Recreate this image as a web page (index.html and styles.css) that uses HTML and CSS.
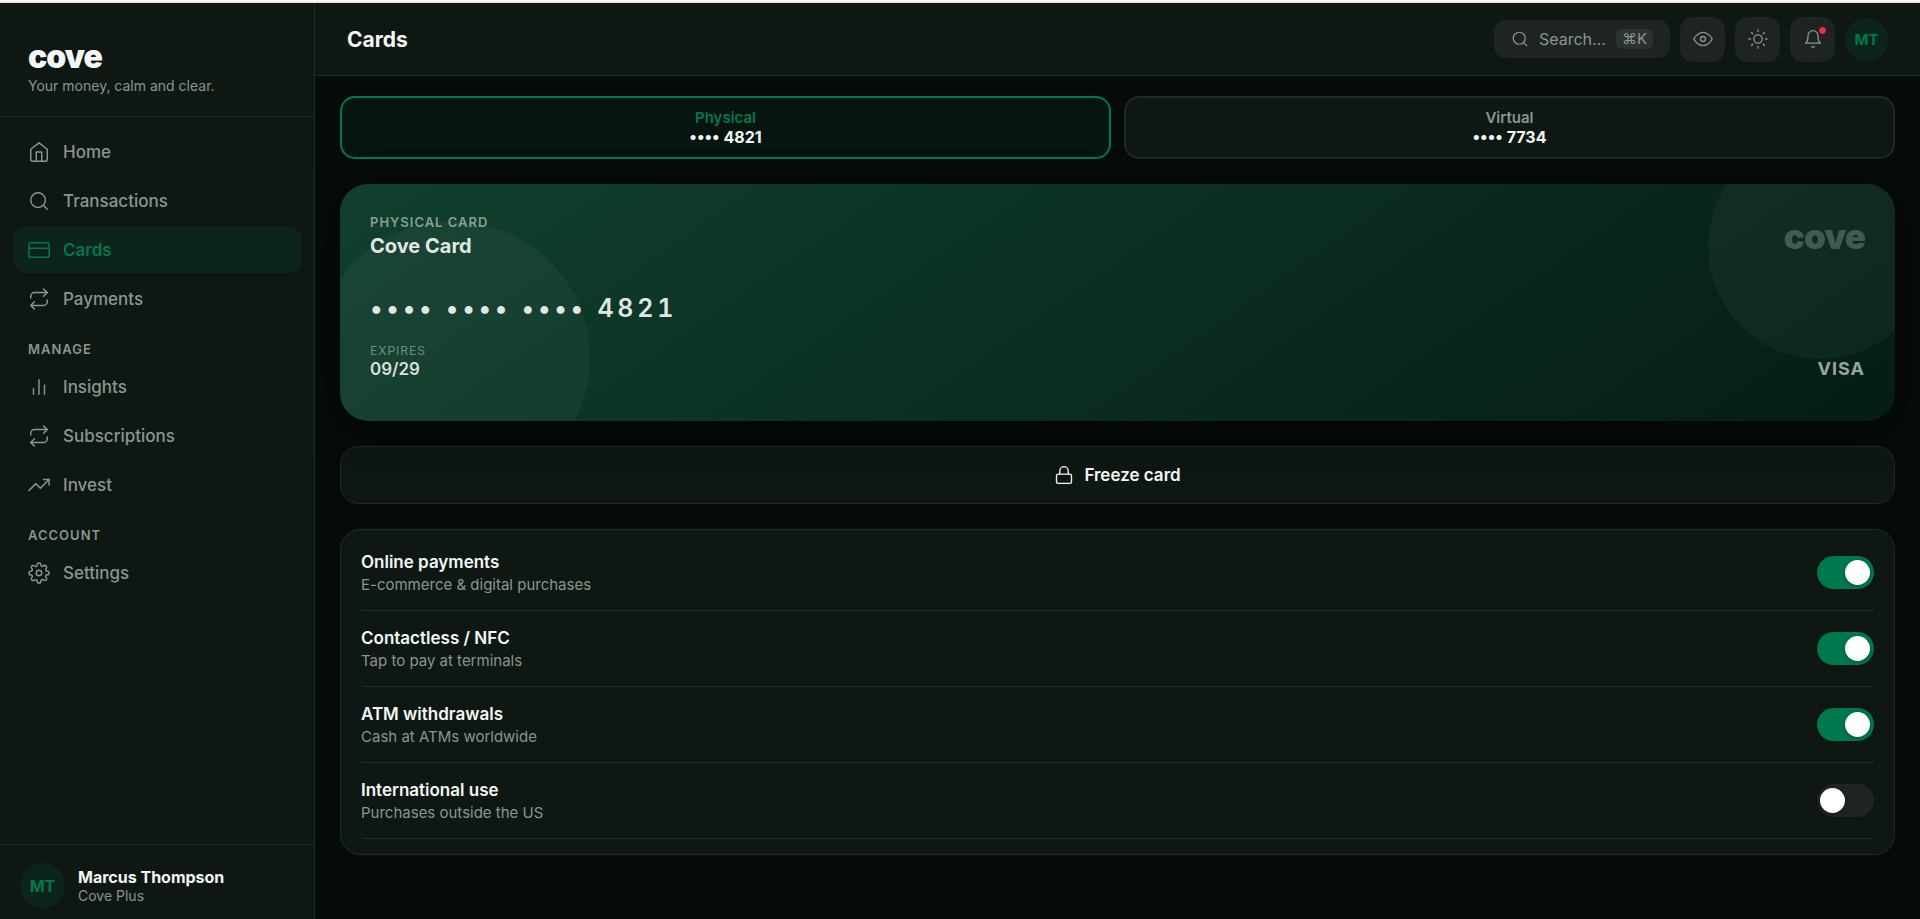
FILE: index.html
```html
<!DOCTYPE html>
<html lang="en">
<head>
    <meta charset="UTF-8">
    <meta name="viewport" content="width=device-width, initial-scale=1.0">
    <title>Cove - Cards</title>
    <link rel="stylesheet" href="styles.css">
</head>
<body>
<div class="strip"></div>
<div class="app">

    <!-- Sidebar -->
    <aside class="sidebar">
        <div class="brand">
            <div class="logo">cove</div>
            <div class="tagline">Your money, calm and clear.</div>
        </div>

        <nav class="nav">
            <a class="nav-item" href="#home">
                <svg class="icon" viewBox="0 0 24 24"><path d="M3 9l9-7 9 7v11a2 2 0 0 1-2 2H5a2 2 0 0 1-2-2z"/><path d="M9 22V12h6v10"/></svg>
                Home
            </a>
            <a class="nav-item" href="#transactions">
                <svg class="icon" viewBox="0 0 24 24"><circle cx="11" cy="11" r="8"/><path d="M21 21l-4.35-4.35"/></svg>
                Transactions
            </a>
            <a class="nav-item active" href="#cards">
                <svg class="icon" viewBox="0 0 24 24"><rect x="1" y="4" width="22" height="16" rx="2"/><path d="M1 10h22"/></svg>
                Cards
            </a>
            <a class="nav-item" href="#payments">
                <svg class="icon" viewBox="0 0 24 24"><path d="M17 1l4 4-4 4"/><path d="M3 11V9a4 4 0 0 1 4-4h14"/><path d="M7 23l-4-4 4-4"/><path d="M21 13v2a4 4 0 0 1-4 4H3"/></svg>
                Payments
            </a>

            <div class="nav-label">Manage</div>
            <a class="nav-item" href="#insights">
                <svg class="icon" viewBox="0 0 24 24"><path d="M18 20V10"/><path d="M12 20V4"/><path d="M6 20v-6"/></svg>
                Insights
            </a>
            <a class="nav-item" href="#subscriptions">
                <svg class="icon" viewBox="0 0 24 24"><path d="M17 1l4 4-4 4"/><path d="M3 11V9a4 4 0 0 1 4-4h14"/><path d="M7 23l-4-4 4-4"/><path d="M21 13v2a4 4 0 0 1-4 4H3"/></svg>
                Subscriptions
            </a>
            <a class="nav-item" href="#invest">
                <svg class="icon" viewBox="0 0 24 24"><path d="M23 6l-9.5 9.5-5-5L1 18"/><path d="M17 6h6v6"/></svg>
                Invest
            </a>

            <div class="nav-label">Account</div>
            <a class="nav-item" href="#settings">
                <svg class="icon" viewBox="0 0 24 24"><circle cx="12" cy="12" r="3"/><path d="M19.4 15a1.65 1.65 0 0 0 .33 1.82l.06.06a2 2 0 0 1 0 2.83 2 2 0 0 1-2.83 0l-.06-.06a1.65 1.65 0 0 0-1.82-.33 1.65 1.65 0 0 0-1 1.51V21a2 2 0 0 1-2 2 2 2 0 0 1-2-2v-.09A1.65 1.65 0 0 0 9 19.4a1.65 1.65 0 0 0-1.82.33l-.06.06a2 2 0 0 1-2.83 0 2 2 0 0 1 0-2.83l.06-.06a1.65 1.65 0 0 0 .33-1.82 1.65 1.65 0 0 0-1.51-1H3a2 2 0 0 1-2-2 2 2 0 0 1 2-2h.09A1.65 1.65 0 0 0 4.6 9a1.65 1.65 0 0 0-.33-1.82l-.06-.06a2 2 0 0 1 0-2.83 2 2 0 0 1 2.83 0l.06.06a1.65 1.65 0 0 0 1.82.33H9a1.65 1.65 0 0 0 1-1.51V3a2 2 0 0 1 2-2 2 2 0 0 1 2 2v.09a1.65 1.65 0 0 0 1 1.51 1.65 1.65 0 0 0 1.82-.33l.06-.06a2 2 0 0 1 2.83 0 2 2 0 0 1 0 2.83l-.06.06a1.65 1.65 0 0 0-.33 1.82V9a1.65 1.65 0 0 0 1.51 1H21a2 2 0 0 1 2 2 2 2 0 0 1-2 2h-.09a1.65 1.65 0 0 0-1.51 1z"/></svg>
                Settings
            </a>
        </nav>

        <div class="profile">
            <div class="avatar">MT</div>
            <div>
                <div class="profile-name">Marcus Thompson</div>
                <div class="profile-plan">Cove Plus</div>
            </div>
        </div>
    </aside>

    <div class="main">
        <!-- Top bar -->
        <header class="topbar">
            <h1>Cards</h1>
            <div class="actions">
                <button class="search" type="button">
                    <svg class="icon icon-xs" viewBox="0 0 24 24"><circle cx="11" cy="11" r="8"/><path d="M21 21l-4.35-4.35"/></svg>
                    <span>Search…</span>
                    <kbd>⌘K</kbd>
                </button>
                <button class="icon-btn" type="button" aria-label="Hide balances">
                    <svg class="icon icon-sm" viewBox="0 0 24 24"><path d="M1 12s4-8 11-8 11 8 11 8-4 8-11 8-11-8-11-8z"/><circle cx="12" cy="12" r="3"/></svg>
                </button>
                <button class="icon-btn" type="button" aria-label="Theme">
                    <svg class="icon icon-sm" viewBox="0 0 24 24"><circle cx="12" cy="12" r="5"/><path d="M12 1v2M12 21v2M4.22 4.22l1.42 1.42M18.36 18.36l1.42 1.42M1 12h2M21 12h2M4.22 19.78l1.42-1.42M18.36 5.64l1.42-1.42"/></svg>
                </button>
                <button class="icon-btn" type="button" aria-label="Notifications">
                    <svg class="icon icon-sm" viewBox="0 0 24 24"><path d="M18 8A6 6 0 0 0 6 8c0 7-3 9-3 9h18s-3-2-3-9"/><path d="M13.73 21a2 2 0 0 1-3.46 0"/></svg>
                    <span class="dot"></span>
                </button>
                <button class="avatar avatar-sm" type="button">MT</button>
            </div>
        </header>

        <main class="content">
            <div class="tabs">
                <button class="tab active" type="button">
                    <span class="tab-name">Physical</span>
                    <span class="tab-number">•••• 4821</span>
                </button>
                <button class="tab" type="button">
                    <span class="tab-name">Virtual</span>
                    <span class="tab-number">•••• 7734</span>
                </button>
            </div>

            <!-- Bank card -->
            <section class="card">
                <div class="card-row">
                    <div>
                        <div class="card-type">Physical card</div>
                        <div class="card-name">Cove Card</div>
                    </div>
                    <div class="card-logo">cove</div>
                </div>
                <div class="card-number">•••• •••• •••• 4821</div>
                <div class="card-row card-bottom">
                    <div>
                        <div class="card-label">Expires</div>
                        <div class="card-date">09/29</div>
                    </div>
                    <div class="card-network">VISA</div>
                </div>
            </section>

            <button class="freeze" type="button">
                <svg class="icon icon-sm" viewBox="0 0 24 24"><rect x="3" y="11" width="18" height="11" rx="2"/><path d="M7 11V7a5 5 0 0 1 10 0v4"/></svg>
                Freeze card
            </button>

            <!-- Card controls -->
            <section class="controls">
                <label class="control">
                    <span>
                        <span class="control-name">Online payments</span>
                        <span class="control-text">E-commerce &amp; digital purchases</span>
                    </span>
                    <input class="toggle" type="checkbox" checked>
                </label>
                <label class="control">
                    <span>
                        <span class="control-name">Contactless / NFC</span>
                        <span class="control-text">Tap to pay at terminals</span>
                    </span>
                    <input class="toggle" type="checkbox" checked>
                </label>
                <label class="control">
                    <span>
                        <span class="control-name">ATM withdrawals</span>
                        <span class="control-text">Cash at ATMs worldwide</span>
                    </span>
                    <input class="toggle" type="checkbox" checked>
                </label>
                <label class="control">
                    <span>
                        <span class="control-name">International use</span>
                        <span class="control-text">Purchases outside the US</span>
                    </span>
                    <input class="toggle" type="checkbox">
                </label>
            </section>
        </main>
    </div>
</div>
</body>
</html>
```
FILE: styles.css
```css
:root {
    --bg: #050b09;
    --surface: #0f1713;
    --surface-2: #1e2421;
    --border: #222825;
    --text: #f4f7f5;
    --muted: #8b9590;
    --green: #00784e;
    --green-soft: #0d241c;
}

* {
    box-sizing: border-box;
}

body {
    margin: 0;
    background: var(--bg);
    color: var(--text);
    font-family: Inter, sans-serif;
    font-size: 16px;
}

button {
    font-family: inherit;
    color: inherit;
    border: none;
    cursor: pointer;
}

.strip {
    height: 3px;
    background: #fbf7f6;
    border-bottom: 1px solid #f6dcc6;
}

.app {
    display: flex;
    height: calc(100vh - 3px);
}

.icon {
    width: 22px;
    height: 22px;
    flex-shrink: 0;
    fill: none;
    stroke: currentColor;
    stroke-width: 1.6;
    stroke-linecap: round;
    stroke-linejoin: round;
}

.icon-sm {
    width: 20px;
    height: 20px;
}

.icon-xs {
    width: 18px;
    height: 18px;
}

/* Sidebar */
.sidebar {
    position: relative;
    z-index: 1;
    width: 315px;
    flex-shrink: 0;
    display: flex;
    flex-direction: column;
    background: var(--surface);
    border-right: 1px solid var(--border);
}

.brand {
    padding: 34px 28px 21px;
    border-bottom: 1px solid var(--border);
}

.logo {
    font-size: 32px;
    line-height: 40px;
    font-weight: 900;
    letter-spacing: -1px;
}

.tagline {
    font-size: 14px;
    line-height: 18px;
    color: var(--muted);
}

.nav {
    flex: 1;
    display: flex;
    flex-direction: column;
    gap: 3px;
    padding: 12px 12px 12px 13px;
}

.nav-item {
    display: flex;
    align-items: center;
    gap: 13px;
    height: 46px;
    padding: 0 15px;
    border-radius: 13px;
    color: var(--muted);
    font-size: 17px;
    font-weight: 500;
    text-decoration: none;
}

.nav-item.active {
    background: var(--green-soft);
    color: var(--green);
    font-weight: 600;
}

.nav-label {
    padding: 16px 15px 4px;
    color: var(--muted);
    font-size: 13px;
    line-height: 16px;
    font-weight: 600;
    letter-spacing: 1px;
    text-transform: uppercase;
}

.profile {
    display: flex;
    align-items: center;
    gap: 13px;
    padding: 18px 20px 11px;
    border-top: 1px solid var(--border);
}

.avatar {
    display: flex;
    align-items: center;
    justify-content: center;
    width: 45px;
    height: 45px;
    padding: 0;
    border-radius: 50%;
    background: var(--green-soft);
    color: var(--green);
    font-size: 16px;
    font-weight: 700;
}

.avatar-sm {
    width: 43px;
    height: 43px;
    font-size: 15px;
}

.profile-name {
    font-size: 16px;
    line-height: 20px;
    font-weight: 700;
}

.profile-plan {
    font-size: 14px;
    line-height: 18px;
    color: var(--muted);
}

/* Top bar */
.main {
    flex: 1;
    min-width: 0;
    display: flex;
    flex-direction: column;
}

.topbar {
    display: flex;
    align-items: center;
    justify-content: space-between;
    height: 73px;
    padding: 0 32px;
    background: var(--surface);
    border-bottom: 1px solid var(--border);
}

h1 {
    margin: 0;
    font-size: 21px;
    font-weight: 700;
}

.actions {
    display: flex;
    align-items: center;
    gap: 10px;
}

.search {
    display: flex;
    align-items: center;
    gap: 10px;
    height: 38px;
    padding: 0 17px;
    border-radius: 12px;
    background: var(--surface-2);
    color: var(--muted);
    font-size: 16px;
}

kbd {
    padding: 0 6px;
    border-radius: 6px;
    background: #2c322f;
    font-family: inherit;
    font-size: 15px;
    line-height: 20px;
}

.icon-btn {
    position: relative;
    display: flex;
    align-items: center;
    justify-content: center;
    width: 45px;
    height: 45px;
    padding: 0;
    border-radius: 13px;
    background: var(--surface-2);
    color: var(--muted);
}

.dot {
    position: absolute;
    top: 9px;
    right: 8px;
    width: 9px;
    height: 9px;
    border: 1px solid var(--surface);
    border-radius: 50%;
    background: #ef3338;
}

/* Content */
.content {
    flex: 1;
    display: flex;
    flex-direction: column;
    gap: 25px;
    padding: 20px 25px;
}

.tabs {
    display: flex;
    gap: 13px;
}

.tab {
    flex: 1;
    display: flex;
    flex-direction: column;
    align-items: center;
    padding: 10px;
    border: 2px solid var(--border);
    border-radius: 15px;
    background: var(--surface);
}

.tab.active {
    border-color: var(--green);
    background: #06150f;
}

.tab-name {
    font-size: 15px;
    line-height: 19px;
    font-weight: 600;
    color: var(--muted);
}

.tab.active .tab-name {
    color: var(--green);
}

.tab-number {
    font-size: 16px;
    line-height: 20px;
    font-weight: 700;
}

.card {
    position: relative;
    overflow: hidden;
    padding: 30px;
    border-radius: 28px;
    background: linear-gradient(145deg, #10402d 0%, #0a2a1e 60%, #051d14 100%);
    box-shadow: 0 10px 40px rgba(0, 0, 0, 0.4);
}

.card::before,
.card::after {
    content: "";
    position: absolute;
    border-radius: 50%;
    background: rgba(255, 255, 255, 0.04);
}

.card::before {
    top: -50px;
    right: -38px;
    width: 225px;
    height: 225px;
}

.card::after {
    bottom: -75px;
    left: -25px;
    width: 275px;
    height: 275px;
}

.card-row {
    display: flex;
    justify-content: space-between;
}

.card-type,
.card-label {
    line-height: 16px;
    letter-spacing: 1px;
    text-transform: uppercase;
}

.card-type {
    font-size: 13px;
    font-weight: 600;
    color: rgba(255, 255, 255, 0.5);
}

.card-label {
    font-size: 12px;
    color: rgba(255, 255, 255, 0.4);
}

.card-name {
    padding-top: 3px;
    font-size: 20px;
    line-height: 26px;
    font-weight: 700;
    color: rgba(255, 255, 255, 0.9);
}

.card-logo {
    font-size: 35px;
    line-height: 44px;
    font-weight: 900;
    letter-spacing: -1px;
    color: rgba(255, 255, 255, 0.22);
}

.card-number {
    padding: 33px 0 19px;
    font-size: 25px;
    line-height: 32px;
    font-weight: 600;
    letter-spacing: 0.15em;
    font-variant-numeric: tabular-nums;
    color: rgba(255, 255, 255, 0.9);
}

.card-bottom {
    align-items: flex-end;
    padding-bottom: 12px;
}

.card-date {
    font-size: 17px;
    line-height: 20px;
    font-weight: 600;
    color: rgba(255, 255, 255, 0.85);
}

.card-network {
    font-size: 18px;
    line-height: 20px;
    font-weight: 700;
    letter-spacing: 1px;
    color: rgba(255, 255, 255, 0.6);
}

.freeze {
    display: flex;
    align-items: center;
    justify-content: center;
    gap: 10px;
    height: 58px;
    border: 1px solid var(--border);
    border-radius: 18px;
    background: var(--surface);
    font-size: 17px;
    font-weight: 600;
}

.controls {
    padding: 5px 20px 15px;
    border: 1px solid var(--border);
    border-radius: 20px;
    background: var(--surface);
}

.control {
    display: flex;
    align-items: center;
    justify-content: space-between;
    height: 76px;
    border-bottom: 1px solid var(--border);
    cursor: pointer;
}

.control-name,
.control-text {
    display: block;
}

.control-name {
    padding-bottom: 1px;
    font-size: 17px;
    line-height: 24px;
    font-weight: 600;
}

.control-text {
    font-size: 15px;
    line-height: 20px;
    color: var(--muted);
}

.toggle {
    appearance: none;
    display: flex;
    align-items: center;
    width: 57px;
    height: 33px;
    margin: 0;
    padding: 0 3px;
    border-radius: 17px;
    background: var(--surface-2);
    cursor: pointer;
}

.toggle::before {
    content: "";
    width: 25px;
    height: 25px;
    border-radius: 50%;
    background: #fff;
    box-shadow: 0 1px 4px rgba(0, 0, 0, 0.3);
}

.toggle:checked {
    justify-content: flex-end;
    padding-right: 4px;
    background: var(--green);
}
```
